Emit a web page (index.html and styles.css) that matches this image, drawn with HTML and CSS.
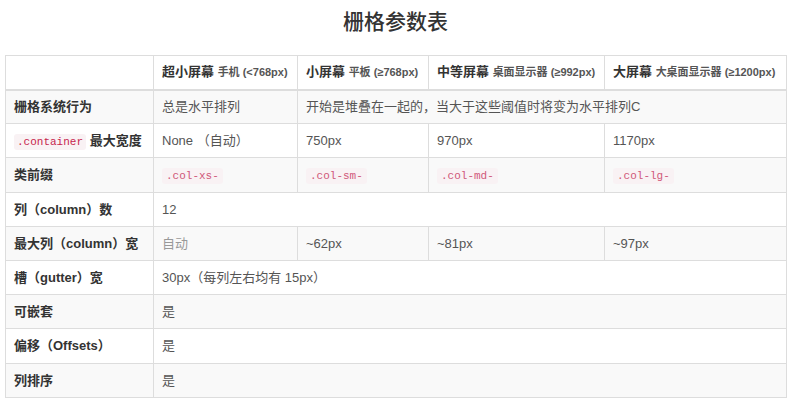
FILE: index.html
```html
<!DOCTYPE html>
<html lang="zh-CN">
<head>
<meta charset="utf-8">
<title>栅格参数表</title>
<link rel="stylesheet" href="styles.css">
</head>
<body>
<div class="page">
  <h1 class="title">栅格参数表</h1>
  <table class="grid-table">
    <colgroup>
      <col class="c1"><col class="c2"><col class="c3"><col class="c4"><col class="c5">
    </colgroup>
    <thead>
      <tr>
        <th></th>
        <th>超小屏幕 <small>手机 (&lt;768px)</small></th>
        <th>小屏幕 <small>平板 (≥768px)</small></th>
        <th>中等屏幕 <small>桌面显示器 (≥992px)</small></th>
        <th>大屏幕 <small>大桌面显示器 (≥1200px)</small></th>
      </tr>
    </thead>
    <tbody>
      <tr>
        <th>栅格系统行为</th>
        <td>总是水平排列</td>
        <td colspan="3">开始是堆叠在一起的，当大于这些阈值时将变为水平排列C</td>
      </tr>
      <tr>
        <th><code>.container</code> 最大宽度</th>
        <td>None （自动）</td>
        <td>750px</td>
        <td>970px</td>
        <td>1170px</td>
      </tr>
      <tr>
        <th>类前缀</th>
        <td><code class="sm">.col-xs-</code></td>
        <td><code class="sm">.col-sm-</code></td>
        <td><code class="sm">.col-md-</code></td>
        <td><code class="sm">.col-lg-</code></td>
      </tr>
      <tr>
        <th>列（column）数</th>
        <td colspan="4">12</td>
      </tr>
      <tr>
        <th>最大列（column）宽</th>
        <td class="muted">自动</td>
        <td>~62px</td>
        <td>~81px</td>
        <td>~97px</td>
      </tr>
      <tr>
        <th>槽（gutter）宽</th>
        <td colspan="4">30px（每列左右均有 15px）</td>
      </tr>
      <tr>
        <th>可嵌套</th>
        <td colspan="4">是</td>
      </tr>
      <tr>
        <th>偏移（Offsets）</th>
        <td colspan="4">是</td>
      </tr>
      <tr>
        <th>列排序</th>
        <td colspan="4">是</td>
      </tr>
    </tbody>
  </table>
</div>
</body>
</html>
```
FILE: styles.css
```css
html, body {
  margin: 0;
  padding: 0;
  background: #fff;
}
body {
  font-family: "Liberation Sans", Arial, "Noto Sans CJK SC", sans-serif;
  font-size: 13px;
  color: #555;
}
.page {
  padding: 0 7px 0 5px;
}
.title {
  margin: 0;
  height: 55px;
  line-height: 44px;
  text-align: center;
  font-size: 21px;
  font-weight: 500;
  color: #333;
}
.grid-table {
  width: 781px;
  border-collapse: collapse;
  table-layout: fixed;
  border: 1px solid #ddd;
}
.c1 { width: 148px; }
.c2 { width: 144px; }
.c3 { width: 131px; }
.c4 { width: 176px; }
.c5 { width: 182px; }
.grid-table tr {
  height: 34.2px;
}
.grid-table th,
.grid-table td {
  border: 1px solid #ddd;
  padding: 0 8px;
  line-height: 17px;
  text-align: left;
  vertical-align: middle;
  white-space: nowrap;
}
.grid-table th {
  font-weight: bold;
  color: #333;
}
.grid-table thead tr {
  height: 34px;
}
.grid-table thead th {
  border-bottom: 2px solid #ddd;
}
.grid-table small {
  font-size: 11px;
  font-weight: bold;
  color: #555;
}
.grid-table tbody tr:nth-child(odd) {
  background: #f9f9f9;
}
code {
  font-family: "Liberation Mono", "DejaVu Sans Mono", monospace;
  font-size: 11px;
  line-height: 1;
  color: #c7254e;
  background: #f9f2f4;
  padding: 2px 3px;
  border-radius: 3px;
  font-weight: normal;
}
code.sm {
  padding: 2px 4px;
  color: #d0587a;
}
.muted {
  color: #999;
}
```
